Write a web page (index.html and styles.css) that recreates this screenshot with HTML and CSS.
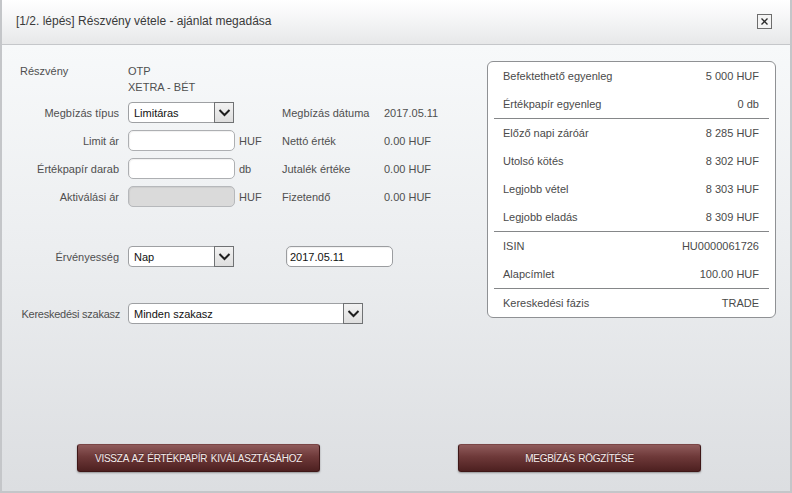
FILE: index.html
```html
<!DOCTYPE html>
<html lang="hu">
<head>
<meta charset="utf-8">
<title>Részvény vétele</title>
<link rel="stylesheet" href="styles.css">
</head>
<body>
<div class="window">
  <div class="titlebar">
    <span class="title">[1/2. lépés] Részvény vétele - ajánlat megadása</span>
    <span class="close" aria-label="Bezárás">
      <svg width="13" height="13" viewBox="0 0 13 13"><path d="M3.5 3.5 L9.5 9.5 M9.5 3.5 L3.5 9.5" stroke="#2b2b2b" stroke-width="1.3" fill="none"/></svg>
    </span>
  </div>
  <div class="content">
    <div class="main">
      <div class="form">
        <div class="frow info-head">
          <span class="lbl-left">Részvény</span>
          <span class="val">OTP</span>
        </div>
        <div class="frow info-head">
          <span></span>
          <span class="val">XETRA - BÉT</span>
        </div>

        <div class="fgrid block-b">
          <span class="lbl">Megbízás típus</span>
          <div class="select"><span class="sel-text">Limitáras</span><span class="arrow"><svg width="17" height="17" viewBox="0 0 17 17"><path d="M3.5 6 L8.5 11 L13.5 6" stroke="#1e1e1e" stroke-width="2" fill="none"/></svg></span></div>
          <span class="unit"></span>
          <span class="lbl2">Megbízás dátuma</span>
          <span class="val2">2017.05.11</span>

          <span class="lbl">Limit ár</span>
          <span class="input"></span>
          <span class="unit">HUF</span>
          <span class="lbl2">Nettó érték</span>
          <span class="val2">0.00 HUF</span>

          <span class="lbl">Értékpapír darab</span>
          <span class="input"></span>
          <span class="unit">db</span>
          <span class="lbl2">Jutalék értéke</span>
          <span class="val2">0.00 HUF</span>

          <span class="lbl">Aktiválási ár</span>
          <span class="input disabled"></span>
          <span class="unit">HUF</span>
          <span class="lbl2">Fizetendő</span>
          <span class="val2">0.00 HUF</span>
        </div>

        <div class="fgrid block-c">
          <span class="lbl">Érvényesség</span>
          <div class="select"><span class="sel-text">Nap</span><span class="arrow"><svg width="17" height="17" viewBox="0 0 17 17"><path d="M3.5 6 L8.5 11 L13.5 6" stroke="#1e1e1e" stroke-width="2" fill="none"/></svg></span></div>
          <span class="unit"></span>
          <span class="input date">2017.05.11</span>
        </div>

        <div class="fgrid block-d">
          <span class="lbl tight">Kereskedési szakasz</span>
          <div class="select wide"><span class="sel-text">Minden szakasz</span><span class="arrow"><svg width="17" height="17" viewBox="0 0 17 17"><path d="M3.5 6 L8.5 11 L13.5 6" stroke="#1e1e1e" stroke-width="2" fill="none"/></svg></span></div>
        </div>
      </div>

      <div class="panel">
        <div class="prow"><span>Befektethető egyenleg</span><span class="pval">5 000 HUF</span></div>
        <div class="prow"><span>Értékpapír egyenleg</span><span class="pval">0 db</span></div>
        <div class="sep"></div>
        <div class="prow"><span>Előző napi záróár</span><span class="pval">8 285 HUF</span></div>
        <div class="prow"><span>Utolsó kötés</span><span class="pval">8 302 HUF</span></div>
        <div class="prow"><span>Legjobb vétel</span><span class="pval">8 303 HUF</span></div>
        <div class="prow"><span>Legjobb eladás</span><span class="pval">8 309 HUF</span></div>
        <div class="sep"></div>
        <div class="prow"><span>ISIN</span><span class="pval">HU0000061726</span></div>
        <div class="prow"><span>Alapcímlet</span><span class="pval">100.00 HUF</span></div>
        <div class="sep"></div>
        <div class="prow"><span>Kereskedési fázis</span><span class="pval">TRADE</span></div>
      </div>
    </div>

    <div class="actions">
      <button class="btn">VISSZA AZ ÉRTÉKPAPÍR KIVÁLASZTÁSÁHOZ</button>
      <button class="btn">MEGBÍZÁS RÖGZÍTÉSE</button>
    </div>
  </div>
</div>
</body>
</html>
```

FILE: styles.css
```css
* { box-sizing: border-box; }

html, body {
  margin: 0;
  padding: 0;
  width: 792px;
  height: 493px;
  overflow: hidden;
  background: #dfe1e4;
}

body {
  font-family: "Liberation Sans", Arial, sans-serif;
  font-size: 11px;
  color: #4f4f4f;
}

.window {
  width: 792px;
  height: 493px;
  display: flex;
  flex-direction: column;
  border-left: 2px solid #c4c6c9;
  border-right: 2px solid #c4c6c9;
  border-bottom: 2px solid #c4c6c9;
}

.titlebar {
  height: 45px;
  flex: none;
  display: flex;
  align-items: center;
  justify-content: space-between;
  padding: 0 18px 2px 14px;
  background: linear-gradient(#ffffff, #f2f3f4 55%, #e7e8e9);
  border-bottom: 1px solid #c5c7ca;
}

.title {
  font-size: 12px;
  color: #3a3a3a;
}

.close {
  width: 15px;
  height: 15px;
  border: 1px solid #6d6d6d;
  background: #f4f4f4;
  display: flex;
  align-items: center;
  justify-content: center;
  margin-top: 1px;
}

.content {
  flex: 1;
  display: flex;
  flex-direction: column;
  background: linear-gradient(#f7f9fa, #eceef0 45%, #dcdee1);
}

.main {
  display: flex;
  align-items: flex-start;
  padding: 15px 0 0 18px;
}

.form {
  flex: none;
  width: 465px;
  padding-top: 3px;
}

.frow,
.fgrid {
  display: grid;
  grid-template-columns: 108px 111px 43px 102px 1fr;
  align-items: center;
}

.info-head {
  height: 16px;
  line-height: 16px;
}

.lbl-left { text-align: left; }

.fgrid {
  grid-auto-rows: 21px;
  row-gap: 7px;
}

.block-b { margin-top: 7px; }
.block-c { margin-top: 39px; }
.block-d { margin-top: 36px; }

.lbl {
  display: flex;
  justify-content: flex-end;
  white-space: nowrap;
  padding-right: 9px;
}

.lbl.tight {
  letter-spacing: -0.25px;
  padding-right: 8px;
}

.select {
  width: 106px;
  height: 21px;
  display: flex;
  align-items: stretch;
  background: #ffffff;
  border: 1px solid #9ea0a3;
  border-radius: 4px 0 0 4px;
}

.select.wide {
  width: 235px;
  grid-column: 2 / span 3;
}

.sel-text {
  flex: 1;
  display: flex;
  align-items: center;
  padding-left: 5px;
  color: #111;
  font-size: 11px;
}

.arrow {
  width: 20px;
  margin: -1px -1px -1px 0;
  border: 1px solid #707274;
  background: linear-gradient(#f2f2f2, #dedede);
  display: flex;
  align-items: center;
  justify-content: center;
}

.input {
  width: 107px;
  height: 21px;
  background: #ffffff;
  border: 1px solid #adafb2;
  border-radius: 5px;
  box-shadow: inset 1px 1px 1px rgba(0, 0, 0, 0.06);
}

.input.disabled {
  background: #dadada;
  border-color: #b6b8bb;
}

.input.date {
  grid-column: 4 / span 2;
  margin-left: 4px;
  display: flex;
  align-items: center;
  padding-left: 3px;
  color: #111;
  border-color: #9b9da0;
}

.panel {
  flex: none;
  width: 289px;
  margin-left: 2px;
  margin-top: 1px;
  background: #ffffff;
  border: 1px solid #8f9194;
  border-radius: 6px;
}

.prow {
  height: 28px;
  display: flex;
  align-items: center;
  justify-content: space-between;
  padding: 0 16px 0 15px;
  color: #4a4a4a;
}

.sep {
  height: 1px;
  margin: 0 6px;
  background: #858789;
}

.actions {
  margin-top: auto;
  display: flex;
  gap: 138px;
  padding: 0 0 19px 75px;
}

.btn {
  width: 243px;
  height: 28px;
  border: 1px solid #3f1717;
  border-top-color: #7a4646;
  border-radius: 3px;
  background: linear-gradient(#8f5b5b, #6e3939 45%, #4d2020);
  color: #f4ecec;
  font-family: "Liberation Sans", Arial, sans-serif;
  font-size: 10px;
  letter-spacing: -0.25px;
  word-spacing: 1px;
  text-shadow: 0 -1px 0 rgba(0, 0, 0, 0.35);
  box-shadow: 0 1px 2px rgba(0, 0, 0, 0.35);
  padding: 0;
  cursor: pointer;
}
```
